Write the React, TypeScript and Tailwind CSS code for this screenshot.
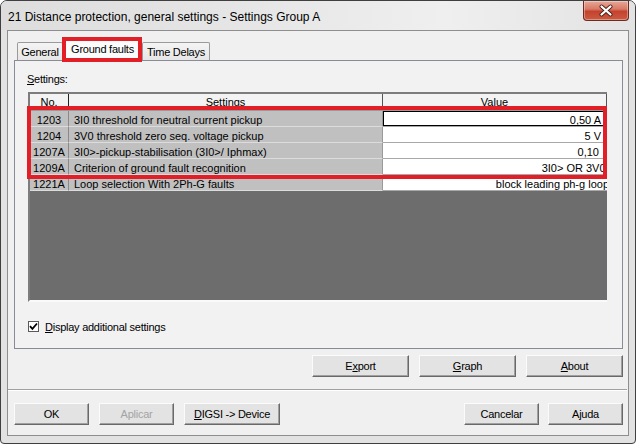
import React from "react";

const U = ({ children }: { children: React.ReactNode }) => (
  <span className="underline underline-offset-[1px]">{children}</span>
);

function Btn({ children, w, disabled }: { children: React.ReactNode; w: string; disabled?: boolean }) {
  return (
    <div
      className={`${w} h-[22px] flex items-center justify-center bg-[#e3e3e3] border border-t-[#fbfbfb] border-l-[#fbfbfb] border-r-[#696969] border-b-[#696969] shadow-[inset_-1px_-1px_0_#a0a0a0] text-[11px] tracking-[-0.25px] leading-[14px] ${
        disabled ? "text-[#a3a3a3]" : "text-black"
      }`}
    >
      {children}
    </div>
  );
}

type Row = { no: string; s: string; v: string; focus?: boolean; clip?: string; pr?: string };

const rows: Row[] = [
  { no: "1203", s: "3I0 threshold for neutral current pickup", v: "0,50 A", focus: true },
  { no: "1204", s: "3V0 threshold zero seq. voltage pickup", v: "5 V" },
  { no: "1207A", s: "3I0>-pickup-stabilisation (3I0>/ Iphmax)", v: "0,10", pr: "pr-[8px]" },
  { no: "1209A", s: "Criterion of ground fault recognition", v: "3I0> OR 3V0>", clip: "mr-[-5px]" },
  { no: "1221A", s: "Loop selection With 2Ph-G faults", v: "block leading ph-g loop", clip: "mr-[-2px]" },
];

export default function App() {
  return (
    <div className="w-[636px] h-[444px] border border-[#3f3f3f] rounded-t-[7px] rounded-b-[4px] bg-[#e2e2e2] flex flex-col overflow-hidden font-['Liberation_Sans',Arial,sans-serif] text-black">
      {/* Title bar */}
      <div className="h-[29px] flex items-start shrink-0 bg-[linear-gradient(90deg,#dddddd_0%,#e6e6e6_40%,#efefef_70%,#e3e3e3_100%)]">
        <div className="ml-[7px] mt-[8px] leading-[16px] text-[12px]">
          21 Distance protection, general settings - Settings Group A
        </div>
        <div className="ml-auto mr-[6px] w-[46px] h-[20px] rounded-b-[4px] border border-t-0 border-[#6b2a22] bg-[linear-gradient(180deg,#e8a899_0%,#d97a66_42%,#c4432e_55%,#cc5a42_100%)] shadow-[inset_0_0_0_1px_rgba(255,255,255,0.35)] flex items-center justify-center">
          <svg width="16" height="13" viewBox="0 0 16 13">
            <path d="M3.5 2.5 L12.5 10.5 M12.5 2.5 L3.5 10.5" stroke="#4a1c16" strokeWidth="4" strokeLinecap="round" />
            <path d="M3.5 2.5 L12.5 10.5 M12.5 2.5 L3.5 10.5" stroke="#ffffff" strokeWidth="2.3" strokeLinecap="round" />
          </svg>
        </div>
      </div>

      {/* Client */}
      <div className="mx-[6px] h-[406px] border border-[#8e8e8e] bg-[#f0f0f0] flex flex-col pt-[7px]">
        {/* Tabs */}
        <div className="h-[22px] flex items-end pl-[9px] text-[11px] tracking-[-0.25px]">
          <div className="w-[46px] h-[18px] flex items-center justify-center border border-b-0 border-[#9a9a9a] rounded-t-[2px] bg-[linear-gradient(180deg,#f4f4f4,#e6e6e6)] leading-[14px]">
            General
          </div>
          <div className="relative z-10 w-[79px] h-[23px] mb-[-1px] flex items-center justify-center bg-[#fbfbfb] leading-[14px] pb-[1px]">
            Ground faults
            <div className="absolute left-[-1px] top-[-1px] w-[80px] h-[25px] border-4 border-[#e21f26]" />
          </div>
          <div className="w-[68px] h-[18px] flex items-center justify-center border border-b-0 border-[#9a9a9a] rounded-t-[2px] bg-[linear-gradient(180deg,#f4f4f4,#e6e6e6)] leading-[14px]">
            Time Delays
          </div>
        </div>

        {/* Tab panel */}
        <div className="ml-[6px] w-[609px] h-[289px] border border-[#898c95] bg-[#f2f2f2] flex flex-col pt-[11px] pl-[12px]">
          <div className="text-[11px] tracking-[-0.25px] leading-[14px]">
            <U>S</U>ettings:
          </div>

          {/* Grid */}
          <div className="relative mt-[6px] ml-[1px] w-[579px] h-[210px] border-l-2 border-t-2 border-b-2 border-l-[#7d7d7d] border-t-[#7d7d7d] border-b-[#fafafa] bg-[#6d6d6d] flex flex-col text-[11px] leading-[14px]">
            {/* header */}
            <div className="h-[17px] flex bg-[#f3f3f3] border-b border-[#9a9a9a]">
              <div className="w-[39px] flex items-center justify-center border-r border-[#222]">No.</div>
              <div className="w-[314px] flex items-center justify-center border-r border-[#555]">Settings</div>
              <div className="flex-1 flex items-center justify-center border-r border-[#555]">Value</div>
            </div>
            {rows.map((r) => (
              <div key={r.no} className="h-[16px] flex">
                <div className="w-[39px] flex items-start pt-[2px] justify-center bg-[#c0c0c0] border-r border-[#8a8a8a] border-b border-b-[#dcdcdc]">
                  {r.no}
                </div>
                <div className="w-[314px] flex items-start pt-[2px] pl-[5px] bg-[#c0c0c0] border-r border-[#9a9a9a] border-b border-b-[#dcdcdc] whitespace-nowrap">
                  {r.s}
                </div>
                <div
                  className={`flex-1 flex items-start pt-[2px] justify-end overflow-hidden bg-white border-b border-[#a8a8a8] whitespace-nowrap ${
                    r.clip ? "" : r.pr ?? "pr-[6px]"
                  } ${r.focus ? "shadow-[inset_0_0_0_1px_#000]" : ""}`}
                >
                  <span className={r.clip ?? ""}>{r.v}</span>
                </div>
              </div>
            ))}
            <div className="flex-1 bg-[#6d6d6d]" />
            {/* red highlight */}
            <div className="absolute left-[-3px] top-[12px] w-[580px] h-[73px] border-4 border-[#e21f26]" />
          </div>

          {/* checkbox */}
          <div className="mt-[19px] ml-[1px] h-[11px] flex items-center">
            <div className="w-[11px] h-[11px] border border-[#5a5a5a] bg-white flex items-center justify-center">
              <svg width="9" height="9" viewBox="0 0 9 9">
                <path d="M1 4.2 L3.4 6.8 L8 1.5" stroke="#000" strokeWidth="1.8" fill="none" />
              </svg>
            </div>
            <div className="ml-[6px] text-[11px] tracking-[-0.25px] leading-[14px]">
              <U>D</U>isplay additional settings
            </div>
          </div>
        </div>

        {/* Export / Graph / About */}
        <div className="mt-[6px] h-[23px] flex justify-end gap-[10px] pr-[5px]">
          <Btn w="w-[97px]">
            E<U>x</U>port
          </Btn>
          <Btn w="w-[97px]">
            <U>G</U>raph
          </Btn>
          <Btn w="w-[97px]">
            <U>A</U>bout
          </Btn>
        </div>

        {/* separator */}
        <div className="mt-[11px] h-[2px] border-t border-t-[#a0a0a0] border-b border-b-white mr-[1px]" />

        {/* bottom buttons */}
        <div className="mt-[12px] h-[22px] flex pl-[6px] pr-[5px]">
          <div className="flex gap-[10px]">
            <Btn w="w-[75px]">OK</Btn>
            <Btn w="w-[75px]" disabled>
              Aplicar
            </Btn>
            <Btn w="w-[96px]">
              <U>D</U>IGSI -&gt; Device
            </Btn>
          </div>
          <div className="ml-auto flex gap-[9px]">
            <Btn w="w-[75px]">Cancelar</Btn>
            <Btn w="w-[75px]">Ajuda</Btn>
          </div>
        </div>
      </div>
    </div>
  );
}
